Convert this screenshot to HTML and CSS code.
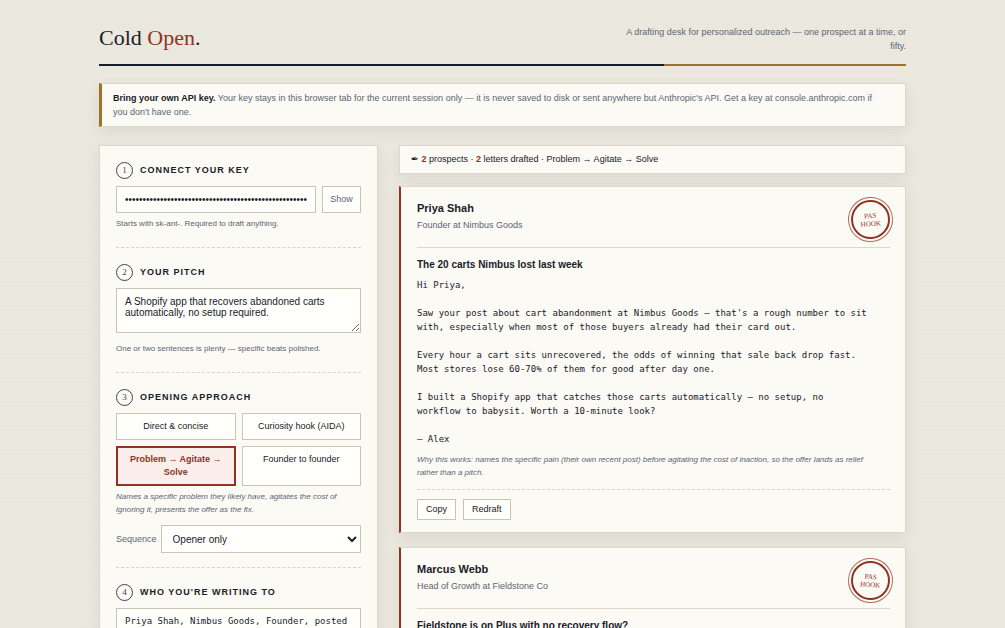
FILE: index.html
```html
<!DOCTYPE html>
<html lang="en">
  <head>
    <meta charset="UTF-8" />
    <meta name="viewport" content="width=device-width, initial-scale=1.0" />
    <title>Cold Open</title>
    <link rel="stylesheet" href="styles.css">
  </head>

  <body>
    <div class="page">
      <header class="masthead">
        <h1>Cold <span>Open</span>.</h1>
        <p class="tagline">A drafting desk for personalized outreach — one prospect at a time, or fifty.</p>
      </header>

      <div class="notice">
        <strong>Bring your own API key.</strong> Your key stays in this browser tab for the current session only — it is never saved to disk or sent anywhere but Anthropic's API. Get a key at console.anthropic.com if you don't have one.
      </div>

      <main class="desk">
        <form class="panel">
          <section class="step">
            <h2><span class="num">1</span><label for="apiKey">Connect your key</label></h2>
            <div class="key-row">
              <input type="password" id="apiKey" value="sk-ant-api03-xxxxxxxxxxxxxxxxxxxxxxxxxxxxxxxxxxxxxxxxxxxxxxxxxxxxxx" />
              <button type="button" class="show-btn" id="showBtn">Show</button>
            </div>
            <p class="hint">Starts with sk-ant-. Required to draft anything.</p>
          </section>

          <section class="step">
            <h2><span class="num">2</span><label for="pitch">Your pitch</label></h2>
            <textarea id="pitch" class="pitch">A Shopify app that recovers abandoned carts automatically, no setup required.</textarea>
            <p class="hint">One or two sentences is plenty — specific beats polished.</p>
          </section>

          <section class="step step-approach">
            <h2><span class="num">3</span>Opening approach</h2>
            <div class="approaches">
              <button type="button">Direct &amp; concise</button>
              <button type="button">Curiosity hook (AIDA)</button>
              <button type="button" class="active">Problem → Agitate → Solve</button>
              <button type="button">Founder to founder</button>
            </div>
            <p class="hint why">Names a specific problem they likely have, agitates the cost of ignoring it, presents the offer as the fix.</p>
            <div class="sequence">
              <label for="sequence">Sequence</label>
              <select id="sequence">
                <option>Opener only</option>
                <option>Opener + follow-up</option>
              </select>
            </div>
          </section>

          <section class="step">
            <h2><span class="num">4</span><label for="prospects">Who you're writing to</label></h2>
            <textarea id="prospects" class="prospects">Priya Shah, Nimbus Goods, Founder, posted
on LinkedIn about high cart abandonment
Marcus Webb, Fieldstone Co, Head of Growth</textarea>
          </section>
        </form>

        <div class="results">
          <div class="summary">✒ <b>2</b> prospects · <b>2</b> letters drafted · Problem → Agitate → Solve</div>

          <article class="letter">
            <div class="letter-head">
              <div>
                <h3>Priya Shah</h3>
                <p class="role">Founder at Nimbus Goods</p>
              </div>
              <div class="seal"><span>PAS<br />HOOK</span></div>
            </div>
            <h4>The 20 carts Nimbus lost last week</h4>
            <div class="letter-body">Hi Priya,

Saw your post about cart abandonment at Nimbus Goods — that's a rough number to sit
with, especially when most of those buyers already had their card out.

Every hour a cart sits unrecovered, the odds of winning that sale back drop fast.
Most stores lose 60-70% of them for good after day one.

I built a Shopify app that catches those carts automatically — no setup, no
workflow to babysit. Worth a 10-minute look?

— Alex</div>
            <p class="hint why">Why this works: names the specific pain (their own recent post) before agitating the cost of inaction, so the offer lands as relief rather than a pitch.</p>
            <div class="actions">
              <button type="button">Copy</button>
              <button type="button">Redraft</button>
            </div>
          </article>

          <article class="letter">
            <div class="letter-head">
              <div>
                <h3>Marcus Webb</h3>
                <p class="role">Head of Growth at Fieldstone Co</p>
              </div>
              <div class="seal seal-alt"><span>PAS<br />HOOK</span></div>
            </div>
            <h4>Fieldstone is on Plus with no recovery flow?</h4>
            <div class="letter-body">Hi Marcus,</div>
            <div class="actions">
              <button type="button">Copy</button>
              <button type="button">Redraft</button>
            </div>
          </article>
        </div>
      </main>
    </div>

    <script>
      const apiKey = document.getElementById("apiKey");
      const showBtn = document.getElementById("showBtn");

      showBtn.addEventListener("click", () => {
        const hidden = apiKey.type === "password";
        apiKey.type = hidden ? "text" : "password";
        showBtn.textContent = hidden ? "Hide" : "Show";
      });
    </script>
  </body>
</html>
```

FILE: styles.css
```css
* {
  margin: 0;
  padding: 0;
  box-sizing: border-box;
}

html {
  scrollbar-width: none;
}

body {
  font-family: "Liberation Sans", Arial, sans-serif;
  font-size: 9px;
  line-height: 14px;
  color: #1a202a;
  background-color: #ebe8df;
  background-image: repeating-linear-gradient(
    rgba(120, 110, 60, 0.01) 0 1px,
    transparent 1px 3px
  );
}

button,
input,
select,
textarea {
  font-family: inherit;
  color: inherit;
  background-color: #fffffc;
  border: 1px solid #c9c4b4;
}

button {
  font-size: 9px;
  line-height: 13px;
  cursor: pointer;
}

.page {
  max-width: 807px;
  margin: 0 auto;
  padding: 25px 0;
}

/* Masthead */
.masthead {
  display: flex;
  justify-content: space-between;
  align-items: flex-start;
  padding-bottom: 11px;
  border-bottom: 2px solid;
  border-image: linear-gradient(90deg, #141c2a 70%, #9a7428 70%) 1;
  margin-bottom: 17px;
}

h1 {
  font-family: "Liberation Serif", "Times New Roman", serif;
  font-size: 22px;
  line-height: 26px;
  font-weight: normal;
}

h1 span {
  color: #8f3325;
}

.tagline {
  max-width: 297px;
  text-align: right;
  color: #5b6574;
}

.notice {
  padding: 7px 20px 7px 11px;
  background-color: #fbfaf5;
  border: 1px solid #dcd8ca;
  border-left: 3px solid #9a7428;
  box-shadow: 0 5px 14px rgba(40, 35, 20, 0.08);
  color: #5b6574;
  margin-bottom: 18px;
}

.notice strong {
  color: #1a202a;
}

.desk {
  display: grid;
  grid-template-columns: 279px 1fr;
  gap: 21px;
  align-items: start;
}

/* Left panel */
.panel {
  padding: 16px;
  background-color: #fbfaf5;
  border: 1px solid #dcd8ca;
  box-shadow: 0 5px 14px rgba(40, 35, 20, 0.08);
}

.step {
  padding-bottom: 17px;
  margin-bottom: 16px;
  border-bottom: 1px dashed #d8d4c8;
}

.step-approach {
  padding-bottom: 14px;
}

.step:last-child {
  border-bottom: none;
}

h2 {
  display: flex;
  align-items: center;
  gap: 7px;
  font-size: 9px;
  line-height: 17px;
  letter-spacing: 1px;
  text-transform: uppercase;
  margin-bottom: 7px;
}

.num {
  width: 17px;
  height: 17px;
  border: 1px solid #3b4250;
  border-radius: 50%;
  font-family: "Liberation Serif", "Times New Roman", serif;
  font-size: 9px;
  line-height: 15px;
  font-weight: normal;
  letter-spacing: 0;
  text-align: center;
  color: #3b4250;
}

.key-row {
  display: flex;
  gap: 6px;
  margin-bottom: 4px;
}

.key-row input {
  flex: 1;
  min-width: 0;
  height: 27px;
  padding: 0 8px;
  font-size: 10px;
}

.show-btn {
  width: 39px;
  color: #5b6574;
}

.hint {
  font-size: 8px;
  line-height: 13px;
  color: #5b6574;
}

.why {
  font-style: italic;
}

textarea {
  display: block;
  width: 100%;
  padding: 7px 8px;
  resize: vertical;
}

.pitch {
  height: 45px;
  font-size: 10px;
  line-height: 11px;
  margin-bottom: 9px;
}

.prospects {
  height: 90px;
  font-family: "DejaVu Sans Mono", monospace;
  font-size: 9px;
  line-height: 11px;
}

.approaches {
  display: grid;
  grid-template-columns: 1fr 1fr;
  gap: 6px;
  margin-bottom: 4px;
}

.approaches button {
  display: flex;
  justify-content: center;
  padding: 6px;
}

.approaches .active {
  padding: 5px;
  border: 2px solid #8f3325;
  background-color: #faeeea;
  color: #8f3325;
  font-weight: bold;
}

.sequence {
  display: flex;
  align-items: center;
  gap: 4px;
  margin-top: 9px;
  color: #5b6574;
}

.sequence select {
  flex: 1;
  height: 28px;
  padding: 0 7px;
  font-size: 10px;
  color: #1a202a;
}

/* Letters */
.results {
  min-width: 0;
}

.summary {
  padding: 7px 11px;
  line-height: 13px;
  background-color: #fbfaf5;
  border: 1px solid #dcd8ca;
  box-shadow: 0 5px 14px rgba(40, 35, 20, 0.08);
  margin-bottom: 12px;
}

.summary b {
  color: #8f3325;
}

.letter {
  padding: 13px 15px 12px 16px;
  background-color: #fbfaf5;
  border: 1px solid #dcd8ca;
  border-left: 2px solid #8f3325;
  box-shadow: 0 5px 14px rgba(40, 35, 20, 0.08);
  margin-bottom: 14px;
}

.letter-head {
  display: flex;
  justify-content: space-between;
  padding-bottom: 8px;
  border-bottom: 1px solid #dcd8ca;
  margin-bottom: 10px;
}

h3 {
  font-size: 11px;
  line-height: 16px;
  margin-bottom: 2px;
}

.role {
  color: #5b6574;
}

.seal {
  display: grid;
  place-items: center;
  width: 39px;
  height: 39px;
  border: 2px solid #8f3325;
  border-radius: 50%;
  outline: 1px solid #b06a5e;
  outline-offset: 2px;
  color: #8f3325;
  font-family: "Liberation Serif", "Times New Roman", serif;
  font-size: 7px;
  line-height: 8px;
  text-align: center;
  transform: rotate(-4deg);
}

.seal-alt {
  transform: rotate(4deg);
}

h4 {
  font-size: 10px;
  line-height: 14px;
  margin-bottom: 6px;
}

.letter-body {
  font-family: "DejaVu Sans Mono", monospace;
  font-size: 9px;
  line-height: 14px;
  white-space: pre-wrap;
  margin-bottom: 7px;
}

.letter .why {
  padding-right: 12px;
}

.actions {
  display: flex;
  gap: 7px;
  padding-top: 9px;
  border-top: 1px dashed #d8d4c8;
  margin-top: 10px;
}

.actions button {
  padding: 3px 8px;
}
```
